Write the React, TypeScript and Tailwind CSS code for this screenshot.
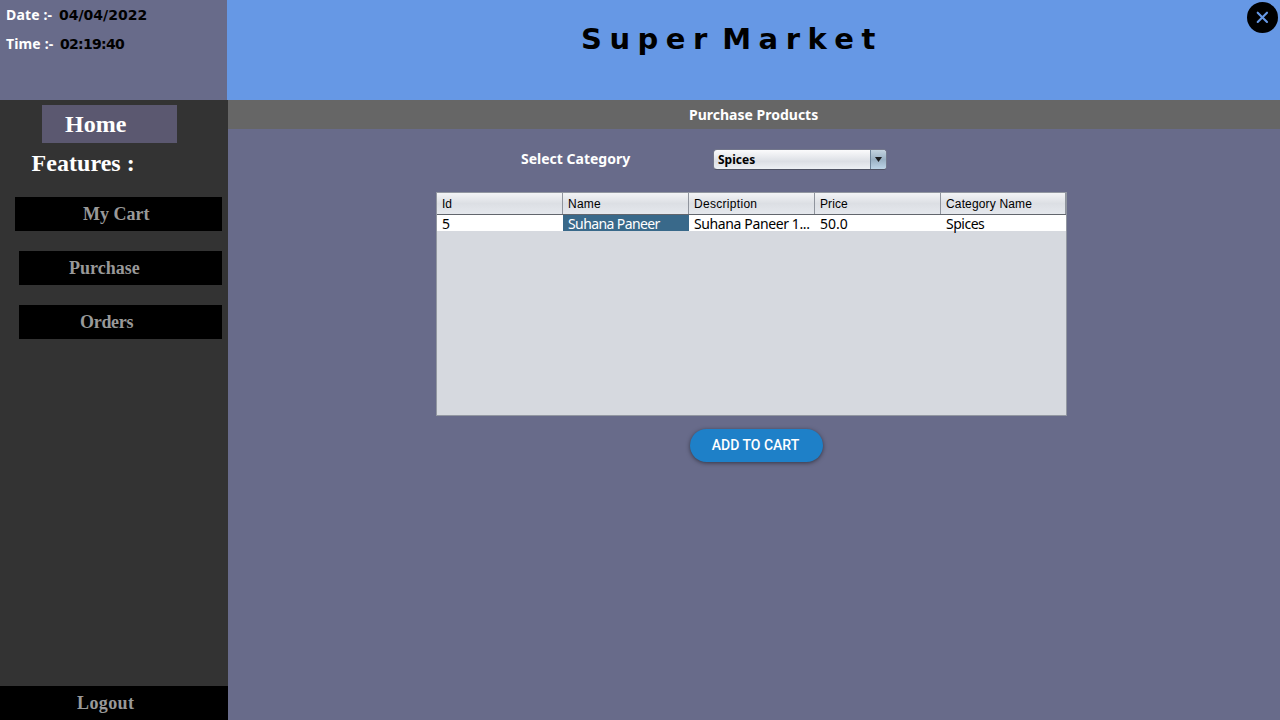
import type { ReactNode } from "react";

const tahoma = "font-['Noto_Sans','Open_Sans',sans-serif]";
const serif = "font-['Liberation_Serif',serif]";
const wide = "font-['DejaVu_Sans',sans-serif]";

function NavButton({ children, className }: { children: ReactNode; className: string }) {
  return (
    <button
      className={`flex h-[34px] shrink-0 items-center bg-black text-left text-[18px] leading-none font-bold whitespace-nowrap text-[#999999] ${serif} ${className}`}
    >
      {children}
    </button>
  );
}

const columns = [
  { label: "Id", value: "5", head: "", cell: "" },
  { label: "Name", value: "Suhana Paneer", head: "tracking-[0.25px]", cell: "tracking-[-0.6px]" },
  { label: "Description", value: "Suhana Paneer 1...", head: "tracking-[0.3px]", cell: "tracking-[-0.38px]" },
  { label: "Price", value: "50.0", head: "tracking-[0.1px]", cell: "" },
  { label: "Category Name", value: "Spices", head: "tracking-[0.15px]", cell: "tracking-[-0.5px]" },
];

function ProductTable() {
  return (
    <div className="ml-[208px] h-[224px] w-[631px] border border-[#9297a1] bg-[#d6d9df]">
      <div className="grid h-[22px] grid-cols-[126px_126px_126px_126px_125px] border-b border-[#62666d] bg-linear-to-b from-[#f3f4f6] via-[#dcdfe4] via-50% to-[#e5e8ed]">
        {columns.map((c) => (
          <div
            key={c.label}
            className={`flex items-center border-r border-[#8f949d] pl-[5px] font-['Liberation_Sans',sans-serif] text-[12px] leading-none whitespace-nowrap text-black ${c.head}`}
          >
            {c.label}
          </div>
        ))}
      </div>
      <div className="grid h-4 grid-cols-[126px_126px_126px_126px_125px] bg-white">
        {columns.map((c) => (
          <div
            key={c.label}
            className={`h-4 pt-[2px] pl-[5px] text-[14px] leading-[14px] whitespace-nowrap ${tahoma} ${
              c.label === "Name" ? "bg-[#39698a] text-white" : "text-black"
            } ${c.cell}`}
          >
            {c.value}
          </div>
        ))}
      </div>
    </div>
  );
}

export default function App() {
  return (
    <div className="flex h-[720px] w-[1280px] flex-col overflow-hidden bg-[#686b8a]">
      <header className="flex h-[100px] shrink-0">
        <div className={`w-[227px] bg-[#686b8a] pt-[6px] pl-[6px] text-[14px] leading-[18px] font-bold whitespace-nowrap ${tahoma}`}>
          <div className="flex">
            <span className="w-[53px] tracking-[0.15px] text-white">Date :-</span>
            <span className={`text-[14px] text-black ${wide}`}>04/04/2022</span>
          </div>
          <div className="mt-[11px] flex">
            <span className="w-[54px] tracking-[0.15px] text-white">Time :-</span>
            <span className={`text-[14px] tracking-[-0.7px] text-black ${wide}`}>02:19:40</span>
          </div>
        </div>
        <div className="flex flex-1 justify-between bg-[#6698e5]">
          <h1 className={`mt-[21px] ml-[354px] h-[36px] text-[29px] leading-[36px] font-bold [word-spacing:-2.6px] whitespace-pre text-black ${wide}`}>
            S u p e r  M a r k e t
          </h1>
          <button aria-label="Close" className="mt-[2px] mr-[2px] flex size-[31px] items-center justify-center rounded-full bg-black">
            <svg width="13" height="13" viewBox="0 0 13 13" fill="none" stroke="#6698e5" strokeWidth="2.1" strokeLinecap="round">
              <path d="M1.7 1.7 11 11M11 1.7 1.7 11" />
            </svg>
          </button>
        </div>
      </header>
      <div className="flex flex-1">
        <aside className="flex w-[228px] shrink-0 flex-col bg-[#333333]">
          <button className={`mt-[5px] ml-[42px] h-[38px] w-[135px] bg-[#5b5870] pl-[23px] text-left text-[24px] leading-[38px] font-bold text-white ${serif}`}>
            Home
          </button>
          <h2 className={`mt-[5px] ml-[31.5px] h-[30px] text-[24px] leading-[30px] font-bold tracking-[0.05px] whitespace-nowrap text-white ${serif}`}>
            Features :
          </h2>
          <nav className="mt-[19px] flex flex-col gap-5">
            <NavButton className="ml-[15px] w-[207px] pl-[68px]">My Cart</NavButton>
            <NavButton className="ml-[19px] w-[203px] pl-[50px]">Purchase</NavButton>
            <NavButton className="ml-[19px] w-[203px] pl-[61px] tracking-[-0.3px]">Orders</NavButton>
          </nav>
          <NavButton className="mt-auto w-full pl-[77px] tracking-[0.4px]">Logout</NavButton>
        </aside>
        <main className="flex flex-1 flex-col">
          <div className={`h-[29px] bg-[#666666] pl-[461px] text-[14px] leading-[29px] font-bold text-white ${tahoma}`}>
            Purchase Products
          </div>
          <div className="mt-[20px] flex h-[21px] items-center pl-[293px]">
            <label className={`mb-[2px] w-[192px] text-[14px] leading-none font-bold text-white ${tahoma}`}>Select Category</label>
            <button className="flex h-[21px] w-[174px] overflow-hidden rounded-[4px] border border-[#73778b] border-b-[#4f5364] bg-linear-to-b from-[#fbfbfc] via-[#dcdfe5] via-60% to-[#edf0f4]">
              <span className={`flex h-full flex-1 items-center pl-[4px] text-[12px] leading-none font-bold text-black ${tahoma}`}>
                Spices
              </span>
              <span className="flex h-full w-[16px] items-center justify-center border-l border-[#6d8399] bg-linear-to-b from-[#c3d3df] via-[#99b0c3] to-[#bdd5e8]">
                <svg width="7" height="5" viewBox="0 0 7 5">
                  <path d="M0 0H7L3.5 5Z" fill="#1b1d20" />
                </svg>
              </span>
            </button>
          </div>
          <div className="mt-[22px]">
            <ProductTable />
          </div>
          <button className="mt-[13px] ml-[462px] h-[33px] w-[133px] rounded-full bg-[#1e80c8] pr-[2px] font-['Roboto',sans-serif] text-[14px] leading-[33px] font-medium whitespace-nowrap text-white shadow-[0_1px_4px_rgba(0,0,0,0.5)]">
            ADD TO CART
          </button>
        </main>
      </div>
    </div>
  );
}
